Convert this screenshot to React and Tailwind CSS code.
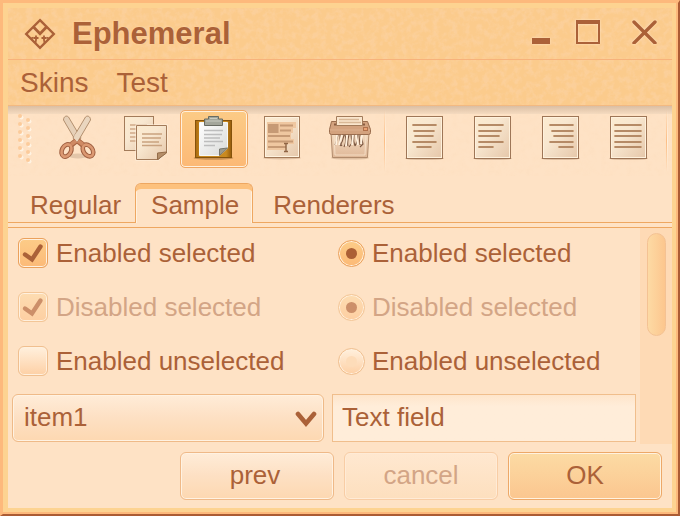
import React from "react";

const BROWN = "#ab6138";

function Grain({ opacity, seed }) {
  const id = "grain" + seed;
  return (
    <svg aria-hidden="true" className="pointer-events-none absolute inset-0 h-full w-full" style={{ opacity }}>
      <filter id={id} x="0" y="0" width="100%" height="100%">
        <feTurbulence type="fractalNoise" baseFrequency="0.16" numOctaves="3" seed={seed} />
        <feColorMatrix values="0 0 0 0 0.98  0 0 0 0 0.68  0 0 0 0 0.44  3 0 0 0 -1.2" />
      </filter>
      <rect width="100%" height="100%" filter={`url(#${id})`} />
    </svg>
  );
}

function Logo() {
  return (
    <svg viewBox="0 0 32 32" className="h-8 w-8" fill="none" stroke={BROWN} strokeWidth="2.4" aria-hidden="true">
      <path d="M16 2.200 29.800 16 16 29.800 2.200 16Z" />
      <path d="M9.500 9 16 15.800 22.500 9" strokeWidth="2.800" />
      <path d="M12 17.500v5M9.500 20h5M20 17.500v5M17.500 20h5" strokeWidth="1.800" />
      <path d="M7 20.500 9.500 19.500M25 20.500 22.500 19.500M11.500 25l.5-3M20.500 25l-.5-3" strokeWidth="1.600" />
    </svg>
  );
}

function Defs() {
  return (
    <defs>
      <linearGradient id="sheet" x1="0" y1="0" x2="1" y2="1">
        <stop offset="0" stopColor="#fcebd0" />
        <stop offset="0.4" stopColor="#f8e7d0" />
        <stop offset="1" stopColor="#e5c6a8" />
      </linearGradient>
      <linearGradient id="white" x1="0" y1="0" x2="1" y2="1">
        <stop offset="0" stopColor="#ffffff" />
        <stop offset="1" stopColor="#d9dad8" />
      </linearGradient>
      <linearGradient id="board" x1="0" y1="0" x2="1" y2="0">
        <stop offset="0" stopColor="#a8690e" />
        <stop offset="0.15" stopColor="#c98a20" />
        <stop offset="0.85" stopColor="#c98a20" />
        <stop offset="1" stopColor="#92590b" />
      </linearGradient>
      <linearGradient id="bin" x1="0" y1="0" x2="0" y2="1">
        <stop offset="0" stopColor="#f3dcc2" />
        <stop offset="1" stopColor="#e0b898" />
      </linearGradient>
    </defs>
  );
}

function Icon({ children }) {
  return (
    <svg viewBox="0 0 68 58" width="68" height="58" className="block shrink-0" fill="none" aria-hidden="true">
      <Defs />
      {children}
    </svg>
  );
}

function Cut() {
  return (
    <Icon>
      <ellipse cx="34" cy="46" rx="9" ry="2.500" fill="#dcbfa2" opacity="0.8" />
      <path d="M19.500 10c0-3.500 3-5 5-3l12.500 21-4 5Z" fill="#e6d0b8" stroke="#b3906f" />
      <path d="M46.500 10c0-3.500-3-5-5-3L29 28l4 5Z" fill="#ead6bf" stroke="#b3906f" />
      <path d="M32 31 27 35M34 31l5 4" stroke="#aa6745" strokeWidth="5.500" />
      <g transform="rotate(28 22.5 40.500)">
        <ellipse cx="22.500" cy="40.500" rx="4.500" ry="6.500" stroke="#9f5f40" strokeWidth="4.600" />
        <ellipse cx="22.500" cy="40.500" rx="4.500" ry="6.500" stroke="#dc9972" strokeWidth="2.600" />
      </g>
      <g transform="rotate(-36 44 40.500)">
        <ellipse cx="44" cy="40.500" rx="4.500" ry="6.500" stroke="#9f5f40" strokeWidth="4.600" />
        <ellipse cx="44" cy="40.500" rx="4.500" ry="6.500" stroke="#dc9972" strokeWidth="2.600" />
      </g>
      <path d="M32 31 27 34.500M34 31l5 3.500" stroke="#cf8a64" strokeWidth="3.500" />
      <path d="m30 26 3 5 3-5-3-4Z" fill="#ead6bf" />
    </Icon>
  );
}

function Copy() {
  return (
    <Icon>
      <rect x="12.500" y="6.500" width="29" height="34" fill="url(#sheet)" stroke="#a37b5a" />
      <path d="M18 15h17M18 19h17M18 23h17M18 27h17M18 31h17" stroke="#cfa988" strokeWidth="1.600" />
      <path d="M24.500 15.500h30V42l-8 7.500h-22Z" fill="url(#sheet)" stroke="#fff4e2" strokeWidth="2" />
      <path d="M24.500 15.500h30V42l-8 7.500h-22Z" fill="url(#sheet)" stroke="#a37b5a" />
      <path d="M30 24h20M30 28h19M30 32h17M30 35.500h20" stroke="#c9a27f" strokeWidth="1.700" />
      <path d="M45.500 49.500V43l9-1v1Z" fill="#b58e69" stroke="#946c48" />
    </Icon>
  );
}

function Paste() {
  return (
    <Icon>
      <ellipse cx="33.500" cy="48" rx="20" ry="1.800" fill="#8a5a24" opacity="0.45" />
      <rect x="15.500" y="10.500" width="36" height="37" fill="url(#board)" stroke="#85520b" />
      <path d="M19.500 12.500h28V38l-8 7.500h-20Z" fill="url(#white)" stroke="#f8f8f6" />
      <path d="M24 20.500h19M24 24.500h18M24 28h16M24 31.500h19M24 35.500h11" stroke="#bdbdbd" strokeWidth="1.500" />
      <path d="M39.500 45.500V39l8-1Z" fill="#9b9a8e" stroke="#77766c" />
      <path d="M28.500 9V6.500h10V9h4v6.500h-18V9Z" fill="#a3a69b" stroke="#686b62" />
      <path d="M30 8.500h7M26 11h15" stroke="#c9cbc1" />
    </Icon>
  );
}

function SelectText() {
  return (
    <Icon>
      <ellipse cx="34" cy="48" rx="19" ry="1.500" fill="#b28a68" opacity="0.4" />
      <rect x="16.500" y="6.500" width="35" height="41" fill="url(#sheet)" stroke="#a37b5a" />
      <rect x="17.500" y="7.500" width="33" height="39" stroke="#fff3df" />
      <path d="M19 12h29v6h-3v5h-2v6h3v5h-8v6H19Z" fill="#efc7a0" />
      <rect x="20" y="14" width="10.500" height="9" fill="#c69a75" />
      <path d="M32 15.500h13M32 20.500h11M20 26h22M20 31.500h25M20 37h18" stroke="#c69a75" strokeWidth="2" />
      <path d="M36 33.500h4M36 41.500h4M38 33.500v8" stroke="#8f6444" strokeWidth="1.400" />
    </Icon>
  );
}

function Shred() {
  return (
    <Icon>
      <ellipse cx="34" cy="48" rx="19" ry="1.600" fill="#b28a68" opacity="0.4" />
      <path d="M15 22h38l-1.500 25.500h-35Z" fill="url(#bin)" stroke="#b08a6b" />
      <path d="M18 24h32l-1 21H19Z" stroke="#fbe8d2" opacity="0.7" />
      <path d="M15.500 11.500h36l3 8v3q0 2-2 2h-37q-2 0-2-2v-3Z" fill="#d3a27e" stroke="#9a6d4e" />
      <path d="M14 20h40" stroke="#ddb08e" />
      <path d="M18 14.500h31" stroke="#8a5c40" strokeWidth="2" />
      <path d="M20.500 15.500v-9h26v9Z" fill="#fae6cd" stroke="#a37b5a" />
      <path d="M23 9.500h20M23 12.500h22" stroke="#d9b896" strokeWidth="1.500" />
      <rect x="47.500" y="17.500" width="4" height="3" fill="#e9a274" stroke="#b1704a" />
      <path d="M22 25q-1 6-3 10M24 25v8l2 3M28 25q-1 6-4 11M29 25q2 6-1 12M33 25q-2 7-1 11M35 25l1 8-3 4M38 25q-1 6 1 11M41 25q1 6-2 11M43 25l1 10M45 25l2 9-3 3" stroke="#7a5640" strokeWidth="1.100" />
      <path d="M21 25l-1 10M26 25l-3 10M31 25l-1 11M37 25l-1 10M40 25l2 10M46 25l-1 9" stroke="#fff1df" strokeWidth="1.800" />
    </Icon>
  );
}

function Align({ lines }) {
  return (
    <Icon>
      <ellipse cx="34.500" cy="48.500" rx="19.500" ry="1.600" fill="#b28a68" opacity="0.4" />
      <rect x="16.500" y="6.500" width="36" height="42" fill="url(#sheet)" stroke="#9e7657" />
      <rect x="17.500" y="7.500" width="34" height="40" stroke="#fff1dc" />
      {lines.map(([a, b], i) => (
        <g key={i}>
          <path d={`M${a} ${[15, 21, 26, 32, 37][i]}H${b}`} stroke="#d3ad87" strokeWidth="2" />
          <path d={`M${a + 1} ${[15, 21, 26, 32, 37][i]}H${b - 1}`} stroke="#b58a66" strokeWidth="2" />
        </g>
      ))}
    </Icon>
  );
}

const TOOLS_A = [
  ["Cut", <Cut />],
  ["Copy", <Copy />],
  ["Paste", <Paste />],
  ["Select", <SelectText />],
  ["Delete", <Shred />],
];
const TOOLS_B = [
  ["Center", <Align lines={[[22, 47], [23, 45], [24, 44], [22, 47], [26, 42]]} />],
  ["Left", <Align lines={[[20, 46], [20, 44], [20, 42], [20, 46], [20, 36]]} />],
  ["Right", <Align lines={[[23, 48], [25, 48], [27, 48], [23, 48], [32, 48]]} />],
  ["Fill", <Align lines={[[20, 48], [20, 48], [20, 48], [20, 48], [20, 48]]} />],
];

function Tool({ name, active, children }) {
  return (
    <button
      type="button"
      aria-label={name}
      className={
        active
          ? "grid h-[58px] w-[68px] shrink-0 place-content-center overflow-hidden rounded-[5px] border border-[#f0a763] bg-linear-to-b from-[#fccb86] to-[#fcb976] shadow-[inset_0_0_0_1px_#fff0dd]"
          : "grid h-[58px] w-[68px] shrink-0 place-content-center"
      }
    >
      {children}
    </button>
  );
}

function Separator() {
  return (
    <span className="flex h-[62px] w-[2px] shrink-0">
      <span className="flex-1 bg-linear-to-b from-transparent via-[#fcbe85] to-transparent" />
      <span className="flex-1 bg-linear-to-b from-transparent via-[#fff0de] to-transparent" />
    </span>
  );
}

function Grip() {
  const dots = [];
  for (let i = 0; i < 6; i++) {
    dots.push([2, 2 + i * 8], [10, 6 + i * 8]);
  }
  return (
    <svg viewBox="0 0 16 52" width="16" height="52" className="shrink-0" aria-hidden="true">
      {dots.map(([x, y], i) => (
        <g key={i}>
          <circle cx={x + 1.500} cy={y + 1.500} r="2" fill="#fff3e2" />
          <circle cx={x} cy={y} r="2" fill="#fccb9b" />
        </g>
      ))}
    </svg>
  );
}

function Choice({ type, label, checked, disabled }) {
  const radio = type === "radio";
  const shape = radio ? "h-[27px] w-[27px] rounded-full" : "h-[30px] w-[30px] rounded-[6px]";
  const fill = checked
    ? disabled
      ? "border-[#f3c697] from-[#fddcb1] to-[#fdcfa2]"
      : "border-[#eba15c] from-[#fccc88] to-[#fcba77]"
    : "border-[#f0bf8f] from-[#fff0dd] to-[#fdd0a5]";
  const text = disabled ? "text-[#d3a586]" : "text-[#ab6138]";
  return (
    <label className={`flex h-[30px] items-center pl-[6px] ${radio ? "gap-[7px]" : "gap-2"} ${text}`}>
      <span className="relative grid shrink-0 place-items-center">
        <input
          type={type}
          name={radio ? label : undefined}
          defaultChecked={checked}
          disabled={disabled}
          className={`appearance-none border bg-linear-to-b shadow-[inset_0_0_0_1px_#fff0de] ${shape} ${fill}`}
        />
        {checked && !radio && (
          <svg viewBox="0 0 30 30" className="pointer-events-none absolute inset-0" fill="none" aria-hidden="true">
            <path d="M7 16.500 14 21.500 22.500 8.500" stroke={disabled ? "#cc8f69" : BROWN} strokeWidth="4.400" strokeLinecap="round" />
          </svg>
        )}
        {radio && (
          <span
            className={`pointer-events-none absolute h-[11px] w-[11px] rounded-full ${
              checked ? (disabled ? "bg-[#cc8f69]" : "bg-[#ab5f35]") : "bg-[#fddcb9]"
            }`}
          />
        )}
      </span>
      <span className="whitespace-nowrap">{label}</span>
    </label>
  );
}

const BTN = "h-12 w-[154px] rounded-[6px] border bg-linear-to-b pb-[2px] text-center";

export default function App() {
  return (
    <div className="flex min-h-screen flex-col border-t-[3px] border-r-2 border-b-2 border-l-[3px] border-t-[#fdb97c] border-r-[#ab5c34] border-b-[#ab5c34] border-l-[#fdb97c] bg-[#fdb97c] pr-[2px] pb-[2px] font-['Liberation_Sans',Arial,sans-serif] text-[26px] leading-[30px] text-[#ab6138]">
      <div className="flex flex-1 flex-col border-t-[5px] border-r-4 border-b-4 border-l-[5px] border-[#fdd391] bg-[#fee2c5]">
        <div className="relative bg-[#fbcb8c]">
          <Grain opacity={0.4} seed={4} />
          <header className="relative flex h-[52px] items-center border-b border-[#f7b27b] pl-4">
            <Logo />
            <h1 className="ml-4 flex-1 text-[31px] leading-9 font-bold [text-shadow:0_0_2px_#fddcae]">Ephemeral</h1>
            <div className="-mt-1 flex items-center gap-[26px] pr-[15px]">
              <button type="button" aria-label="Minimize" className="drop-shadow-[0_0_1px_#ffe6c8]">
                <svg viewBox="0 0 18 24" width="18" height="24" className="block">
                  <path d="M0 18h18v6H0Z" fill={BROWN} />
                </svg>
              </button>
              <button type="button" aria-label="Maximize" className="drop-shadow-[0_0_1px_#ffe6c8]">
                <svg viewBox="0 0 24 24" width="24" height="24" className="block">
                  <path d="M0 0h24v24H0ZM2 4v18h20V4Z" fill={BROWN} fillRule="evenodd" />
                </svg>
              </button>
              <button type="button" aria-label="Close" className="ml-[6px] drop-shadow-[0_0_1px_#ffe6c8]">
                <svg viewBox="0 0 25 24" width="25" height="24" className="block">
                  <path d="M2 2 23 23M23 2 2 23" stroke={BROWN} strokeWidth="3.400" strokeLinecap="round" />
                </svg>
              </button>
            </div>
          </header>
          <nav className="relative flex h-[46px] items-center gap-7 border-b border-[#f3b981] pl-3 text-[28px]">
            <button type="button">Skins</button>
            <button type="button">Test</button>
          </nav>
        </div>

        <div className="relative h-[70px] bg-[#fee2c5]">
          <Grain opacity={0.12} seed={9} />
          <div className="pointer-events-none absolute inset-x-0 top-0 h-2 bg-linear-to-b from-[#dbbfa4] to-[#ecd4bb]/50" />
          <div className="relative flex items-start pt-1 pl-[10px]">
            <div className="mr-[10px] pt-[4px]">
              <Grip />
            </div>
            {TOOLS_A.map(([name, icon]) => (
              <Tool key={name} name={name} active={name === "Paste"}>
                {icon}
              </Tool>
            ))}
            <Separator />
            <div className="ml-1 flex">
              {TOOLS_B.map(([name, icon]) => (
                <Tool key={name} name={name}>
                  {icon}
                </Tool>
              ))}
            </div>
            <div className="ml-1">
              <Separator />
            </div>
          </div>
        </div>

        <div role="tablist" className="mt-[7px] flex h-10">
          <button type="button" role="tab" className="border-b border-[#eea761] pt-1 pr-[14px] pl-[22px]">
            Regular
          </button>
          <button
            type="button"
            role="tab"
            aria-selected="true"
            className="rounded-t-[6px] border-x border-t border-[#eea761] pt-[3px] pr-[13px] pl-[15px] shadow-[inset_0_6px_0_-1px_#fdc17d,inset_1px_0_0_#fff1df,inset_-1px_0_0_#fff1df]"
          >
            Sample
          </button>
          <button type="button" role="tab" className="flex-1 border-b border-[#eea761] pt-1 pl-[20px] text-left">
            Renderers
          </button>
        </div>

        <main className="mt-1 flex flex-1 border-t border-[#eea761]">
          <div className="grid flex-1 grid-cols-[39fr_38fr] content-start gap-x-2 gap-y-6 px-1 pt-[10px]">
            <Choice type="checkbox" label="Enabled selected" checked />
            <Choice type="radio" label="Enabled selected" checked />
            <Choice type="checkbox" label="Disabled selected" checked disabled />
            <Choice type="radio" label="Disabled selected" checked disabled />
            <Choice type="checkbox" label="Enabled unselected" />
            <Choice type="radio" label="Enabled unselected" />
            <div className="relative -mt-[6px]">
              <select
                aria-label="Item"
                className="h-12 w-full appearance-none rounded-[6px] border border-[#efba88] bg-linear-to-b from-[#ffecd8] via-[#fde0c3] to-[#fdd8b1] pb-[2px] pl-[11px] shadow-[inset_0_0_0_1px_#fff2e2]"
              >
                <option>item1</option>
              </select>
              <svg
                viewBox="0 0 22 18"
                width="22"
                height="18"
                className="pointer-events-none absolute top-4 right-[7px]"
                fill="none"
                aria-hidden="true"
              >
                <path d="M3 4 11 13.500 19 4" stroke={BROWN} strokeWidth="4.600" strokeLinecap="round" />
              </svg>
            </div>
            <input
              type="text"
              aria-label="Text field"
              defaultValue="Text field"
              className="-mt-[6px] h-12 w-full min-w-0 border border-[#f0be8c] bg-linear-to-b from-[#fee5cb] to-[#ffedd9] to-25% pb-[2px] pl-[9px]"
            />
          </div>
          <div className="w-8 bg-[#fedab5] pt-[5px] pl-[7px]">
            <div className="h-[103px] w-[19px] rounded-full border border-[#f4c293] bg-linear-to-r from-[#fddaa4] to-[#fcc68e]" />
          </div>
        </main>

        <footer className="mt-2 mb-2 flex justify-end gap-[10px] pr-[10px]">
          <button
            type="button"
            className={`${BTN} border-[#efb988] from-[#ffecd8] via-[#fde0c3] to-[#fdd8b1] pr-1 shadow-[inset_0_0_0_1px_#fff2e2]`}
          >
            prev
          </button>
          <button
            type="button"
            disabled
            className={`${BTN} border-[#f8cda5] from-[#ffe8d0] to-[#fddfbe] text-[#d3a586] shadow-[inset_0_0_0_1px_#ffebd6]`}
          >
            cancel
          </button>
          <button
            type="button"
            className={`${BTN} border-[#eda868] from-[#fcdba4] to-[#fbc68f] shadow-[inset_0_0_0_1px_#fff2df]`}
          >
            OK
          </button>
        </footer>
      </div>
    </div>
  );
}
